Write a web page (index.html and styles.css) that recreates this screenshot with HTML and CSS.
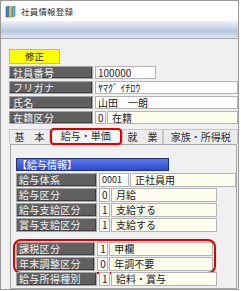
FILE: index.html
```html
<!DOCTYPE html>
<html lang="ja">
<head>
  <meta charset="UTF-8">
  <title>社員情報登録</title>
  <link rel="stylesheet" href="styles.css">
</head>
<body>

<div class="window">
  <div class="titlebar">
    <svg class="app-icon" width="11" height="13" viewBox="0 0 11 13">
      <path d="M1 2 L4 1 L4 12 L1 12 Z" fill="#3d7fd0" stroke="#24589a" stroke-width="0.6"/>
      <path d="M4 1 L7 2 L7 12 L4 12 Z" fill="#e8c640" stroke="#a88a20" stroke-width="0.6"/>
      <path d="M7 2 L10 1 L10 11 L7 12 Z" fill="#5ab0d8" stroke="#2c7aa0" stroke-width="0.6"/>
    </svg>
    <span class="title">社員情報登録</span>
  </div>
  <div class="ribbon"></div>

  <div class="content">
    <div class="mode">修正</div>

    <!-- 社員の基本項目 -->
    <div class="rows top-rows">
      <div class="row">
        <div class="label">社員番号</div>
        <div class="value short">100000</div>
      </div>
      <div class="row">
        <div class="label">フリガナ</div>
        <div class="value grow">ﾔﾏｸﾞ ｲﾁﾛｳ</div>
      </div>
      <div class="row">
        <div class="label">氏名</div>
        <div class="value grow">山田　一朗</div>
      </div>
      <div class="row">
        <div class="label">在籍区分</div>
        <div class="value code">0</div>
        <div class="name grow">在籍</div>
      </div>
    </div>

    <div class="tabs">
      <div class="tab tab-kihon">基　本</div>
      <div class="tab active">給与・単価</div>
      <div class="tab tab-shugyo">就　業</div>
      <div class="tab tab-kazoku">家族・所得税</div>
    </div>

    <div class="panel">
      <div class="section-head">【給与情報】</div>

      <div class="rows">
        <div class="row">
          <div class="label">給与体系</div>
          <div class="value code4">0001</div>
          <div class="name grow">正社員用</div>
        </div>
        <div class="row">
          <div class="label">給与区分</div>
          <div class="value code">0</div>
          <div class="name">月給</div>
        </div>
        <div class="row">
          <div class="label">給与支給区分</div>
          <div class="value code">1</div>
          <div class="name">支給する</div>
        </div>
        <div class="row">
          <div class="label">賞与支給区分</div>
          <div class="value code">1</div>
          <div class="name">支給する</div>
        </div>
      </div>

      <div class="rows tax-rows">
        <div class="marked">
          <div class="row">
            <div class="label">課税区分</div>
            <div class="value code">1</div>
            <div class="name">甲欄</div>
          </div>
          <div class="row">
            <div class="label">年末調整区分</div>
            <div class="value code">0</div>
            <div class="name">年調不要</div>
          </div>
        </div>
        <div class="row">
          <div class="label">給与所得種別</div>
          <div class="value code">1</div>
          <div class="name">給料・賞与</div>
        </div>
      </div>
    </div>
  </div>
</div>

</body>
</html>
```

FILE: styles.css
```css
body {
  margin: 0;
  background: #ffffff;
  font-family: "Noto Sans CJK JP", "DejaVu Sans", sans-serif;
  color: #202020;
}

.window {
  box-sizing: border-box;
  width: 239px;
  height: 290px;
  border: 1px solid #9a9a9a;
  background: #f0f0f0;
  overflow: hidden;
}

.titlebar {
  height: 20px;
  background: #ffffff;
  display: flex;
  align-items: center;
  padding-left: 4px;
  gap: 5px;
}

.title {
  font-size: 8.5px;
  letter-spacing: 0.2px;
  color: #303030;
}

.ribbon {
  height: 17px;
  background: linear-gradient(#eef2f8, #d2dcea 30%, #b7c7dc 60%, #dfe6f0);
  border-bottom: 1px solid #a8a8a8;
}

.content {
  padding: 10px 0 0 8px;
}

.mode {
  box-sizing: border-box;
  width: 51px;
  height: 15px;
  background: #ffff00;
  border: 1px solid #b8b8b8;
  font-size: 9.5px;
  line-height: 13px;
  text-align: center;
  color: #202020;
}

.rows {
  display: flex;
  flex-direction: column;
  gap: 2px;
}

.top-rows {
  margin-top: 2px;
}

.row {
  display: flex;
  height: 13px;
  gap: 2px;
  font-size: 10px;
  line-height: 11px;
}

.label {
  box-sizing: border-box;
  width: 84px;
  background: #606060;
  border: 1px solid #a4a4a4;
  box-shadow: inset -1px -1px 0 #3c3c3c;
  color: #f2f2f2;
  padding-left: 3px;
  letter-spacing: 0.3px;
}

.value,
.name {
  box-sizing: border-box;
  border: 1px solid #b4b4b4;
  padding-left: 2px;
  white-space: nowrap;
  overflow: hidden;
}

.value {
  background: #ffffff;
}

.name {
  background: #fdfdee;
  width: 106px;
  padding-left: 4px;
  margin-left: -1px;
}

.short { width: 61px; }
.code { width: 11px; }
.code4 { width: 30px; font-size: 9px; }
.grow { flex: 1; width: auto; }

.tabs {
  display: flex;
  margin-top: 5px;
  height: 15px;
  font-size: 10px;
  line-height: 13px;
}

.tab {
  box-sizing: border-box;
  border: 1px solid #c8c8c8;
  border-bottom: none;
  background: #ececec;
  color: #303030;
  white-space: nowrap;
  text-align: center;
  padding: 0;
}

.tab-kihon { width: 41px; }
.tab-shugyo { width: 42px; }
.tab-kazoku { width: 75px; }

.tab.active {
  width: 72px;
  border: 2px solid #e00000;
  border-radius: 4px;
  line-height: 11px;
  height: 17px;
  margin-top: -1px;
  background: #f4f4f4;
}

.panel {
  box-sizing: border-box;
  width: 227px;
  height: 145px;
  margin-left: 1px;
  border: 1px solid #a8a8a8;
  padding: 13px 0 0 5px;
}

.section-head {
  box-sizing: border-box;
  width: 153px;
  height: 13px;
  background: linear-gradient(#5a78e6, #2c4cd0);
  border: 1px solid #22307a;
  color: #ffffff;
  font-size: 10px;
  line-height: 11px;
  margin-bottom: 2px;
}

.panel .label {
  width: 81px;
  padding-left: 2px;
}

.panel .row {
  height: 14px;
  line-height: 12px;
}

.panel .rows {
  gap: 1px;
}

.tax-rows {
  margin-top: 10px;
}

.marked {
  display: flex;
  flex-direction: column;
  gap: 1px;
  outline: 2px solid #e00000;
  outline-offset: 1px;
  border-radius: 5px;
  width: 197px;
}
```
